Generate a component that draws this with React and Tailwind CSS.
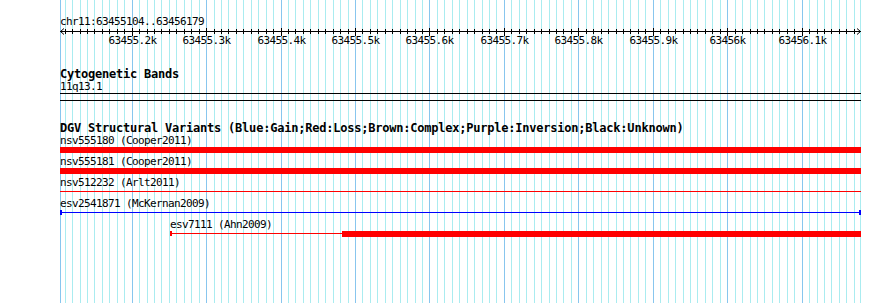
const START = 63455104
const END = 63456179
const X0 = 60.2
const SCALE = 0.7444

const px = (bp) => X0 + (bp - START) * SCALE

const minorColor = "#aaecf0"
const majorColor = "#88c6ee"

const Grid = () => {
  const lines = []
  for (let bp = 63455110; bp <= 63456170; bp += 10) {
    const x = Math.round(px(bp)) + 0.5
    lines.push(
      <line key={bp} x1={x} x2={x} y1={0} y2={303} stroke={bp % 100 === 0 ? majorColor : minorColor} strokeWidth={1} />
    )
  }
  return (
    <svg className="absolute inset-0" width={890} height={303}>
      <line x1={60.5} x2={60.5} y1={0} y2={303} stroke={majorColor} />
      {lines}
      <line x1={860.5} x2={860.5} y1={0} y2={303} stroke={minorColor} />
    </svg>
  )
}

const Ruler = () => {
  const ticks = []
  const labels = []
  for (let bp = 63455110; bp <= 63456170; bp += 10) {
    const x = Math.round(px(bp)) + 0.5
    const major = bp % 100 === 0
    ticks.push(<line key={bp} x1={x} x2={x} y1={major ? 1 : 2} y2={major ? 9 : 7} stroke="#000" />)
    if (major) {
      const k = bp / 1000
      labels.push(
        <text key={bp} x={x} y={17} textAnchor="middle" fontSize={11} letterSpacing={-0.62}>
          {`${k}k`}
        </text>
      )
    }
  }
  return (
    <svg width={890} height={20} className="block font-[family-name:'DejaVu_Sans_Mono',monospace]">
      <line x1={60} x2={861} y1={4.5} y2={4.5} stroke="#000" />
      <polyline points="64,1.5 60.5,4.5 64,7.5" fill="none" stroke="#000" />
      <polyline points="857,1.5 860.5,4.5 857,7.5" fill="none" stroke="#000" />
      {ticks}
      {labels}
    </svg>
  )
}

const Label = ({ children, className = "" }) => (
  <div className={`h-[12px] text-[11px] leading-[12px] tracking-[-0.62px] whitespace-nowrap ${className}`}>{children}</div>
)

const App = () => {
  return (
    <div className="relative w-[890px] h-[303px] overflow-hidden bg-white text-black font-[family-name:'DejaVu_Sans_Mono',monospace]">
      <Grid />
      <div className="relative flex flex-col">
        <div className="h-[16px]" />
        <div className="pl-[60px] h-[11px] text-[11px] leading-[11px] tracking-[-0.62px]">
          chr11:{START}..{END}
        </div>
        <Ruler />
        <div className="h-[21px]" />

        <div className="pl-[60px] flex flex-col">
          <div className="h-[13px] text-[12px] leading-[13px] font-bold tracking-[-0.22px]">Cytogenetic Bands</div>
          <div className="h-[11px] text-[11px] leading-[11px] tracking-[-0.62px]">11q13.1</div>
          <div className="mt-px w-[801px] h-[8px] border-y border-black" />

          <div className="mt-[20px] h-[14px] text-[12px] leading-[14px] font-bold tracking-[-0.22px] whitespace-nowrap">
            DGV Structural Variants (Blue:Gain;Red:Loss;Brown:Complex;Purple:Inversion;Black:Unknown)
          </div>

          <div className="flex flex-col gap-[3px]">
            <div>
              <Label>nsv555180 (Cooper2011)</Label>
              <div className="w-[801px] h-[6px] bg-[#ff0000]" />
            </div>
            <div>
              <Label>nsv555181 (Cooper2011)</Label>
              <div className="w-[801px] h-[6px] bg-[#ff0000]" />
            </div>
            <div>
              <Label>nsv512232 (Arlt2011)</Label>
              <div className="w-[801px] h-[6px] pt-[2px]">
                <div className="h-px bg-[#ff0000]" />
              </div>
            </div>
            <div>
              <Label>esv2541871 (McKernan2009)</Label>
              <div className="w-[801px] h-[6px] flex items-start">
                <div className="w-[2px] h-[5px] bg-[#0000ff]" />
                <div className="flex-1 h-px mt-[2px] bg-[#0000ff]" />
                <div className="w-[2px] h-[5px] bg-[#0000ff]" />
              </div>
            </div>
            <div className="ml-[110px]">
              <Label>esv7111 (Ahn2009)</Label>
              <div className="w-[691px] h-[6px] flex items-start">
                <div className="w-[2px] h-[5px] bg-[#ff0000]" />
                <div className="w-[170px] h-px mt-[2px] bg-[#ff0000]" />
                <div className="flex-1 h-[6px] bg-[#ff0000]" />
              </div>
            </div>
          </div>
        </div>
      </div>
    </div>
  )
}

export default App
